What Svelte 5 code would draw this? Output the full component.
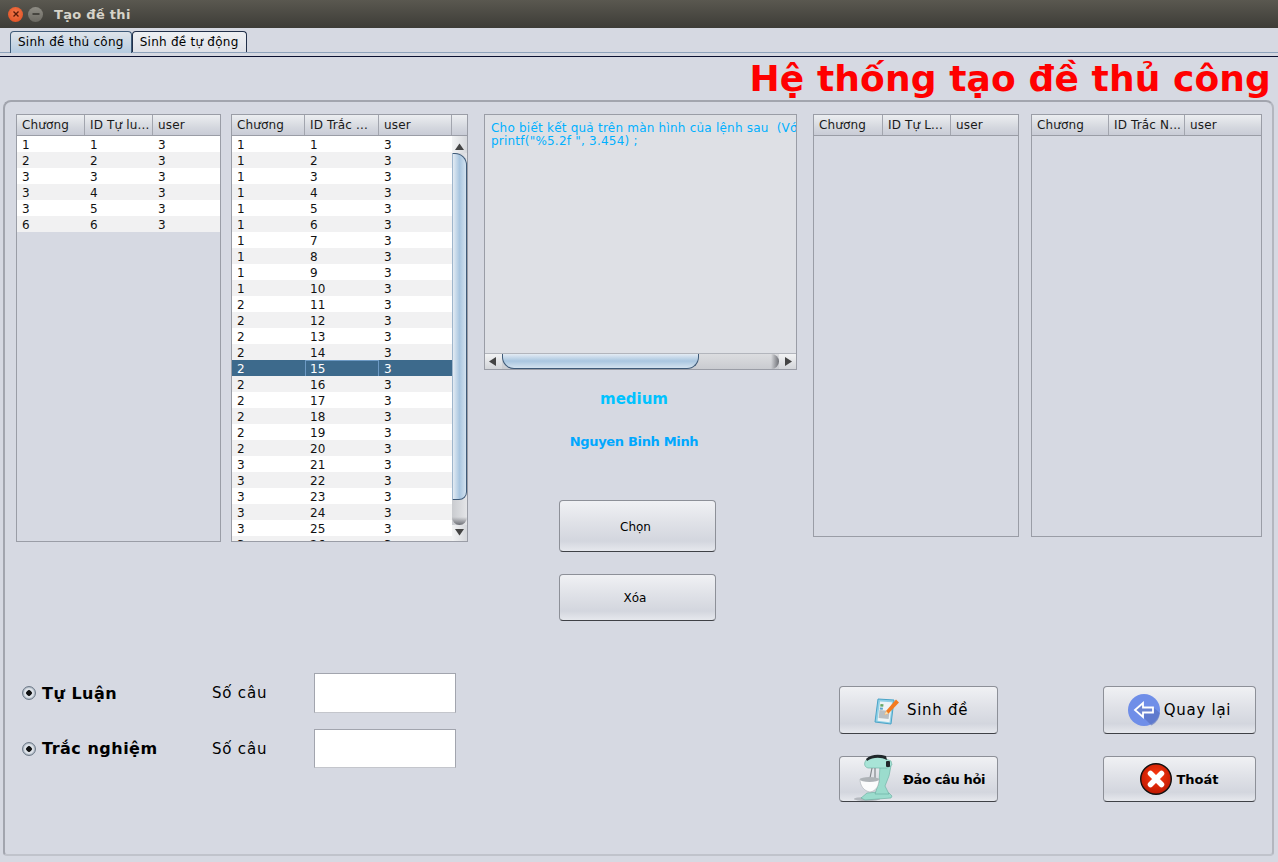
<script>
  const left = [[1,1,3],[2,2,3],[3,3,3],[3,4,3],[3,5,3],[6,6,3]];
  const mid = Array.from({length:26},(_,i)=>[i<10?1:i<20?2:3,i+1,3]);
  const sel = 14;
</script>

{#snippet header(cols, tpl, extra)}
  <div class="thead" style="grid-template-columns:{tpl}">
    {#each cols as c}<div class="th">{c}</div>{/each}
    {#if extra}<div class="th"></div>{/if}
  </div>
{/snippet}

<div class="win">
  <header class="titlebar">
    <span class="wbtn close"><svg width="10" height="10" viewBox="0 0 10 10"><path d="M2.500 2.500l5 5M7.500 2.500l-5 5" stroke="#5a1a08" stroke-width="1.400"/></svg></span>
    <span class="wbtn min"><svg width="10" height="10" viewBox="0 0 10 10"><path d="M1.500 5h7" stroke="#2e2d29" stroke-width="1.400"/></svg></span>
    <span class="wtitle">Tạo đề thi</span>
  </header>

  <nav class="tabs">
    <div class="tab active">Sinh đề thủ công</div>
    <div class="tab">Sinh đề tự động</div>
  </nav>

  <h1 class="heading">Hệ thống tạo đề thủ công</h1>

  <section class="panel">
    <div class="top">
      <div class="table t1">
        {@render header(['Chương','ID Tự lu...','user'],'68px 68px 1fr',false)}
        <div class="tbody">
          {#each left as r}
            <div class="tr" style="grid-template-columns:68px 68px 1fr">{#each r as v}<div class="td">{v}</div>{/each}</div>
          {/each}
        </div>
      </div>

      <div class="table t2">
        {@render header(['Chương','ID Trắc ...','user'],'73px 74px 73px 1fr',true)}
        <div class="scrollwrap">
          <div class="tbody">
            {#each mid as r, i}
              <div class="tr" class:sel={i===sel} style="grid-template-columns:73px 74px 1fr">
                {#each r as v, j}<div class="td" class:focus={i===sel && j===1}>{v}</div>{/each}
              </div>
            {/each}
          </div>
          <div class="vscroll">
            <svg class="arr" width="9" height="7" viewBox="0 0 9 7"><path d="M4.500 0.500L9 7H0z" fill="#444"/></svg>
            <div class="vtrack"><div class="vthumb"></div></div>
            <svg class="arr" width="9" height="7" viewBox="0 0 9 7"><path d="M4.500 6.500L0 0h9z" fill="#444"/></svg>
          </div>
        </div>
      </div>

      <div class="center">
        <div class="question">
          <div class="qtext">Cho biết kết quả trên màn hình của lệnh sau  (Với<br>printf("%5.2f ", 3.454) ;</div>
          <div class="hscroll">
            <svg class="arr" width="7" height="9" viewBox="0 0 7 9"><path d="M0 4.500L7 0v9z" fill="#444"/></svg>
            <div class="htrack"><div class="hthumb"></div></div>
            <svg class="arr" width="7" height="9" viewBox="0 0 7 9"><path d="M7 4.500L0 9V0z" fill="#444"/></svg>
          </div>
        </div>
        <div class="level">medium</div>
        <div class="author">Nguyen Binh Minh</div>
        <button class="btn chon">Chọn</button>
        <button class="btn xoa">Xóa</button>
      </div>

      <div class="table t3">
        {@render header(['Chương','ID Tự L...','user'],'69px 68px 1fr',false)}
      </div>
      <div class="table t4">
        {@render header(['Chương','ID Trắc N...','user'],'77px 76px 1fr',false)}
      </div>
    </div>

    <div class="bottom">
      <div class="form">
        <div class="frow first">
          <span class="radio"></span><span class="rlabel">Tự Luận</span><span class="count">Số câu</span><span class="input"></span>
        </div>
        <div class="frow second">
          <span class="radio"></span><span class="rlabel">Trắc nghiệm</span><span class="count">Số câu</span><span class="input"></span>
        </div>
      </div>

      <div class="actions a1">
        <button class="btn act tall b-sinh">
          <svg width="26" height="30" viewBox="0 0 26 30">
            <path d="M4 4l16 1-3 24-16-2z" fill="#8fd0e6" stroke="#4aa4c8"/>
            <path d="M6 6.500l12 .8-2.500 20-12-1.500z" fill="#eef3f5"/>
            <path d="M5.500 15l10 1-.9 8-10-1.100z" fill="#b9bfc4"/>
            <path d="M6.500 9l3 .2-.3 2.500-3-.2z" fill="#66a866"/>
            <path d="M6 12.500l3 .2-.3 2-3-.2z" fill="#5aa5cc"/>
            <path d="M12 16l-1.500 4 4-1.500L25 7.500 22 4.500z" fill="#f47b20"/>
            <path d="M12 16l-1.500 4 4-1.500z" fill="#f8e0b0"/>
          </svg>
          <span class="lbl big">Sinh đề</span>
        </button>
        <button class="btn act short b-dao">
          <svg class="mixer" width="40" height="50" viewBox="0 0 40 50">
            <ellipse cx="14" cy="47" rx="13" ry="2" fill="#8f959a" opacity=".55"/>
            <path d="M8 46l6-5 12-1 10 1 3 3-1 2-26 2z" fill="#9bdccd" stroke="#66ac9e" stroke-width=".6"/>
            <path d="M27 14h11l-2 10-4 10 4 8H22l4-12z" fill="#9bdccd" stroke="#66ac9e" stroke-width=".6"/>
            <path d="M12 10c1-4 8-6 16-5l10 4 1 4-5 3H15c-3-1-4-3-3-6z" fill="#a8e4d7" stroke="#66ac9e" stroke-width=".6"/>
            <path d="M13 7c5-5 13-5 20-3l1 4c-6-3-14-3-20 1z" fill="#20272a"/>
            <rect x="33" y="9" width="4" height="6" rx="1" fill="#20272a"/>
            <path d="M19 16l-2 10M22 16v10" stroke="#81878b" stroke-width="1.200"/>
            <path d="M7 27h19c0 7-3 12-9 13-6-1-10-6-10-13z" fill="#fbfcfc" stroke="#a9b0b3" stroke-width=".6"/>
            <ellipse cx="16.500" cy="27.500" rx="9.500" ry="2.500" fill="#aeb3b7"/>
          </svg>
          <span class="lbl small">Đảo câu hỏi</span>
        </button>
      </div>

      <div class="actions a2">
        <button class="btn act tall b-quay">
          <svg width="32" height="32" viewBox="0 0 32 32">
            <circle cx="16" cy="16" r="16" fill="#6f8ee8"/>
            <path d="M16 24l7.500 7.500A16 16 0 0 0 32 19l-6-5H16z" fill="#5670c0" opacity=".65"/>
            <path d="M7 16l8-7v4.500h10v5H15V23z" fill="#6a83d0" stroke="#fff" stroke-width="1.800"/>
          </svg>
          <span class="lbl big">Quay lại</span>
        </button>
        <button class="btn act short b-thoat">
          <svg width="32" height="32" viewBox="0 0 32 32">
            <defs><radialGradient id="rg" cx=".5" cy=".4" r=".65"><stop offset="0" stop-color="#ff3a10"/><stop offset="1" stop-color="#b81500"/></radialGradient></defs>
            <circle cx="16" cy="16" r="15.300" fill="url(#rg)" stroke="#111" stroke-width="1.400"/>
            <path d="M10.500 10.500l11 11M21.500 10.500l-11 11" stroke="#fff" stroke-width="5.500" stroke-linecap="round"/>
          </svg>
          <span class="lbl small">Thoát</span>
        </button>
      </div>
    </div>
  </section>
</div>

<style>
  :global(body){margin:0;background:#d6d9e2;}
  .win{width:1278px;height:862px;overflow:hidden;display:flex;flex-direction:column;background:#d6d9e2;font-family:"DejaVu Sans",sans-serif;color:#000;font-size:12px;}

  .titlebar{height:28px;box-sizing:border-box;flex:none;display:flex;align-items:center;padding:0 0 0 8px;background:linear-gradient(#5a5850,#3d3c37);}
  .wbtn{width:15px;height:15px;border-radius:50%;display:flex;align-items:center;justify-content:center;margin-right:5px;}
  .close{background:radial-gradient(circle at 50% 40%,#f4784a,#dc4a1e);}
  .min{background:linear-gradient(#8f8d85,#6b6962);}
  .wtitle{margin-left:6px;color:#d6d3c9;font-weight:700;font-size:13px;letter-spacing:.3px;}

  .tabs{height:29px;flex:none;box-sizing:border-box;display:flex;align-items:flex-end;padding:0 0 0 10px;position:relative;border-bottom:1px solid #0a1030;}
  .tabs::after{content:"";position:absolute;left:0;right:0;bottom:3px;height:1px;background:#8ea2bb;}
  .tab{height:21px;box-sizing:border-box;margin-bottom:4px;padding:3px 7px 0;border:1px solid #22304a;border-bottom:none;border-radius:4px 4px 0 0;background:linear-gradient(#eef0f3,#dfe1e8);font-size:12px;letter-spacing:.25px;position:relative;z-index:1;}
  .tab.active{background:linear-gradient(#dfe4ea,#b5cbe0);padding:3px 7px 0;height:22px;margin-bottom:3px;border-color:#3e5a78;border-bottom:none;}

  .heading{margin:0;height:43px;flex:none;box-sizing:border-box;padding:0 7px 0 0;text-align:right;color:#ff0000;font-size:36px;font-weight:700;line-height:44px;letter-spacing:.12px;font-family:"DejaVu Sans",sans-serif;white-space:nowrap;}

  .panel{flex:none;height:756px;margin:0 4px 0 3px;box-sizing:border-box;border:2px solid #a2a5ae;border-bottom-color:#c0c3cb;border-right-color:#b4b7bf;border-radius:8px 8px 4px 4px;padding:12px 0 0 11px;display:flex;flex-direction:column;}
  .top{display:flex;align-items:flex-start;height:507px;}

  .table{border:1px solid #9a9da6;box-sizing:border-box;overflow:hidden;flex:none;}
  .t1{width:205px;height:428px;margin-right:10px;}
  .t2{width:237px;height:428px;margin-right:16px;}
  .t3{width:206px;height:423px;margin-right:12px;margin-left:16px;}
  .t4{width:231px;height:423px;}
  .thead{display:grid;height:21px;box-sizing:border-box;border-bottom:1px solid #9a9da6;background:linear-gradient(#eceef1,#d5d8df 60%,#c9ccd6);}
  .th{padding:3px 0 0 5px;border-right:1px solid #a2a5ae;font-size:12px;line-height:15px;letter-spacing:.15px;color:#1a1a1a;white-space:nowrap;overflow:hidden;}
  .th:last-child{border-right:none;}
  .tbody{flex:1;min-width:0;overflow:hidden;}
  .tr{display:grid;height:16px;line-height:18px;background:#fff;color:#111;overflow:hidden;}
  .tr:nth-child(even){background:#f1f1f2;}
  .td{padding-left:5px;font-size:12px;box-sizing:border-box;letter-spacing:.2px;}
  .tr.sel{background:#3d6a8c;color:#fff;}
  .td.focus{border:1px solid #6d9ac4;line-height:16px;padding-left:4px;}

  .scrollwrap{display:flex;height:405px;}
  .vscroll{width:15px;flex:none;display:flex;flex-direction:column;align-items:center;background:linear-gradient(90deg,#f3f4f5,#d6d8dc);}
  .arr{flex:none;display:block;}
  .vtrack{flex:1;width:100%;position:relative;background:linear-gradient(90deg,#c9cbcf,#e4e5e8);}
  .vtrack::after{content:"";position:absolute;left:0;right:0;bottom:0;height:8px;background:linear-gradient(transparent,#6d6f75);border-radius:0 0 8px 8px;}
  .vthumb{position:absolute;left:0;right:0;top:0;height:347px;box-sizing:border-box;border:1px solid #3e5a78;border-left-color:#9fb6cc;border-radius:0 12px 8px 0;background:linear-gradient(90deg,#e3ebf3,#a9c6e0 50%,#d3e2ef);}
  .vscroll .arr:first-child{margin:7px 0 3px;}
  .vscroll .arr:last-child{margin:4px 0 5px;}

  .center{width:313px;flex:none;display:flex;flex-direction:column;align-items:flex-start;}
  .question{width:313px;height:256px;box-sizing:border-box;border:1px solid #9a9da6;background:#dee0e5;display:flex;flex-direction:column;overflow:hidden;}
  .qtext{flex:1;padding:7px 0 0 6px;color:#00b0ff;font-size:12px;line-height:13px;letter-spacing:.22px;white-space:pre;overflow:hidden;}
  .hscroll{height:15px;flex:none;display:flex;align-items:center;background:linear-gradient(#f2f3f4,#d3d5d9);border-top:1px solid #b2b5bc;}
  .hscroll .arr:first-child{margin:0 6px 0 4px;}
  .hscroll .arr:last-child{margin:0 4px 0 6px;}
  .htrack{flex:1;height:100%;position:relative;background:linear-gradient(#dcdde0,#c9cbd0);}
  .htrack::after{content:"";position:absolute;top:0;bottom:0;right:0;width:8px;background:linear-gradient(90deg,transparent,#6d6f75);border-radius:0 8px 8px 0;}
  .hthumb{position:absolute;left:0;top:0;bottom:0;width:197px;box-sizing:border-box;border:1px solid #3e5a78;border-top:none;border-radius:0 0 12px 12px;background:linear-gradient(#e3ebf3,#a9c6e0 50%,#d3e2ef);}
  .level{width:300px;text-align:center;margin-top:20px;font-size:15px;font-weight:700;line-height:18px;color:#00c3ff;}
  .author{width:300px;text-align:center;margin-top:26px;font-size:13px;font-weight:700;line-height:16px;letter-spacing:-.33px;color:#00a8ff;}

  .btn{box-sizing:border-box;border:1px solid #8d9098;border-bottom-color:#3f4146;border-radius:4px;background:linear-gradient(#f0f1f4,#dfe1e7 45%,#d3d6de 80%,#e6e8ed);font-family:"DejaVu Sans",sans-serif;color:#000;padding:0;cursor:default;}
  .chon{width:157px;height:52px;margin:50px 0 0 75px;font-size:12px;padding:2px 4px 0 0;}
  .xoa{width:157px;height:47px;margin:22px 0 0 75px;font-size:12px;padding-right:5px;}

  .bottom{display:flex;align-items:flex-start;margin-top:52px;}
  .form{width:823px;flex:none;}
  .frow{display:flex;align-items:center;padding-left:6px;}
  .first{height:40px;}
  .second{height:39px;margin-top:16px;}
  .radio{width:14px;height:14px;box-sizing:border-box;border-radius:50%;border:1px solid #6e7a88;background:radial-gradient(circle,#111 0 2.500px,#cfd6de 3px,#e6e9ee 4px,#a9b4c0 6px);margin-right:6px;flex:none;}
  .rlabel{width:170px;font-size:16px;font-weight:700;letter-spacing:.5px;flex:none;}
  .count{width:102px;font-size:15px;letter-spacing:.8px;flex:none;}
  .input{width:142px;height:100%;background:#fff;border:1px solid #a2a5ae;border-bottom-color:#c4c6cc;box-sizing:border-box;flex:none;}

  .actions{display:flex;flex-direction:column;flex:none;margin-top:13px;}
  .a1{width:159px;margin-right:105px;}
  .a2{width:153px;}
  .act{display:flex;align-items:center;justify-content:center;width:100%;}
  .tall{height:48px;}
  .short{height:46px;margin-top:22px;}
  .lbl.big{font-size:15px;letter-spacing:.7px;}
  .lbl.small{font-size:13px;font-weight:700;}
  .b-sinh{padding-left:5px;}
  .b-sinh svg{margin-right:7px;}
  .b-dao{position:relative;padding-left:63px;justify-content:flex-start;}
  .b-dao .lbl.small{letter-spacing:-.35px;}
  .mixer{position:absolute;left:13px;top:-5px;}
  .b-quay svg{margin-right:4px;}
  .b-thoat svg{margin-right:4px;}
</style>
